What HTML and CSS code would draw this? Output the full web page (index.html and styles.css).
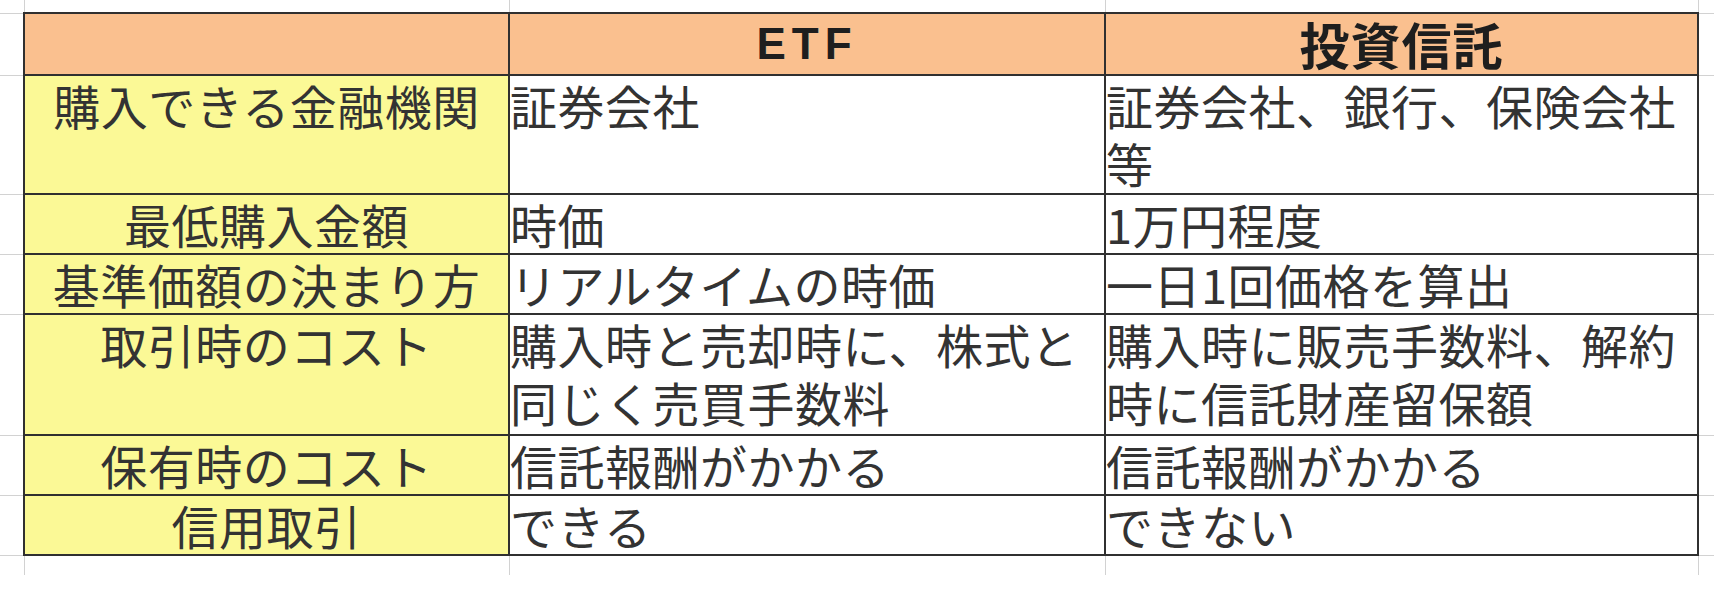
FILE: index.html
```html
<!DOCTYPE html>
<html lang="ja">
<head>
<meta charset="utf-8">
<title>ETFと投資信託の比較</title>
<link rel="stylesheet" href="styles.css">
</head>
<body>
<table class="sheet">
  <colgroup>
    <col class="c-gut">
    <col class="c-label">
    <col class="c-etf">
    <col class="c-fund">
    <col class="c-gut-r">
  </colgroup>
  <tr class="r-top">
    <td class="gut"></td><td class="gut"></td><td class="gut"></td><td class="gut"></td><td class="gut"></td>
  </tr>
  <tr class="r-head">
    <td class="gut"></td>
    <th class="head"></th>
    <th class="head head-etf">ETF</th>
    <th class="head head-fund">投資信託</th>
    <td class="gut"></td>
  </tr>
  <tr class="r-double">
    <td class="gut"></td>
    <td class="label">購入できる金融機関</td>
    <td class="data">証券会社</td>
    <td class="data">証券会社、銀行、保険会社等</td>
    <td class="gut"></td>
  </tr>
  <tr class="r-single">
    <td class="gut"></td>
    <td class="label">最低購入金額</td>
    <td class="data">時価</td>
    <td class="data">1万円程度</td>
    <td class="gut"></td>
  </tr>
  <tr class="r-single">
    <td class="gut"></td>
    <td class="label">基準価額の決まり方</td>
    <td class="data">リアルタイムの時価</td>
    <td class="data">一日1回価格を算出</td>
    <td class="gut"></td>
  </tr>
  <tr class="r-double r-tall">
    <td class="gut"></td>
    <td class="label">取引時のコスト</td>
    <td class="data">購入時と売却時に、株式と同じく売買手数料</td>
    <td class="data">購入時に販売手数料、解約時に信託財産留保額</td>
    <td class="gut"></td>
  </tr>
  <tr class="r-single r-five">
    <td class="gut"></td>
    <td class="label">保有時のコスト</td>
    <td class="data">信託報酬がかかる</td>
    <td class="data">信託報酬がかかる</td>
    <td class="gut"></td>
  </tr>
  <tr class="r-single">
    <td class="gut"></td>
    <td class="label">信用取引</td>
    <td class="data">できる</td>
    <td class="data">できない</td>
    <td class="gut"></td>
  </tr>
  <tr class="r-bottom">
    <td class="gut"></td><td class="gut"></td><td class="gut"></td><td class="gut"></td><td class="gut"></td>
  </tr>
</table>
</body>
</html>
```
FILE: styles.css
```css
html, body {
  margin: 0;
  padding: 0;
  background: #ffffff;
}

body {
  width: 1714px;
  height: 600px;
  overflow: hidden;
  font-family: "Noto Sans CJK JP", "Noto Sans", sans-serif;
  color: #333333;
}

.sheet {
  table-layout: fixed;
  border-collapse: collapse;
  width: 1714px;
}

.c-gut { width: 24px; }
.c-label { width: 485px; }
.c-etf { width: 596px; }
.c-fund { width: 593px; }
.c-gut-r { width: 16px; }

.sheet td,
.sheet th {
  padding: 0;
}

/* spreadsheet gridlines around the table */
.gut {
  border: 1px solid #d2d2d2;
}
.sheet tr > .gut:first-child {
  border-left: none;
}
.sheet tr > .gut:last-child {
  border-right: none;
}
.r-top .gut {
  border-top: none;
}
.r-bottom .gut {
  border-bottom: none;
}

.r-top { height: 13px; }
.r-head { height: 59px; }
.r-single { height: 59px; }
.r-five { height: 60px; }
.r-double { height: 119px; }
.r-tall { height: 121px; }
.r-bottom { height: 20px; }

/* table body */
.head,
.label,
.data {
  border: 2px solid #303030;
  vertical-align: top;
  font-size: 47px;
  line-height: 58px;
  letter-spacing: 0.5px;
  font-weight: 400;
  white-space: normal;
  word-break: break-all;
}

.head {
  background: #fac08f;
  font-weight: 700;
  text-align: center;
  color: #1e1e1e;
}

.head-etf {
  font-family: "Liberation Sans", Arial, sans-serif;
  font-size: 44px;
  letter-spacing: 6px;
  padding-left: 6px;
  line-height: 60px;
}

.head-fund {
  font-size: 50px;
  letter-spacing: 1px;
}

.label {
  background: #fbf996;
  text-align: center;
}

.data {
  background: #ffffff;
  text-align: left;
  padding-left: 8px;
}
```
